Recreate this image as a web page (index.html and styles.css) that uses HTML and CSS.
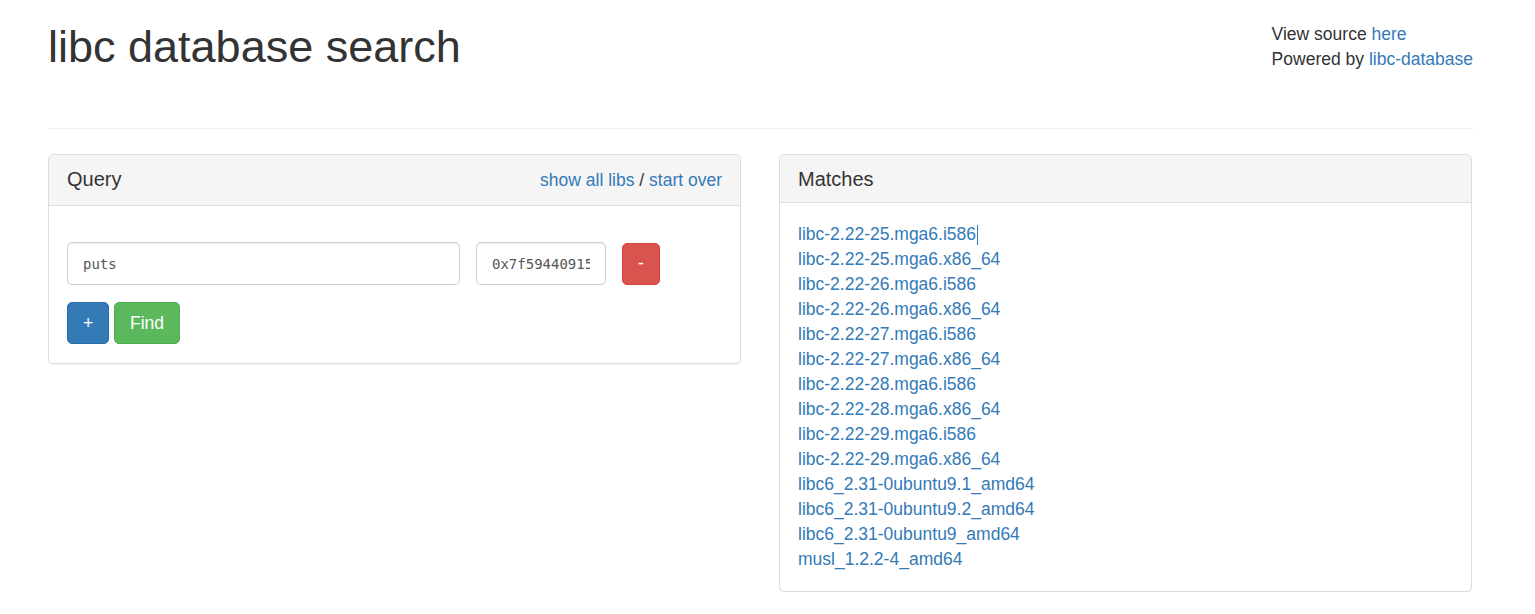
FILE: index.html
```html
<!DOCTYPE html>
<html>
<head>
<meta charset="utf-8">
<title>libc database search</title>
<link rel="stylesheet" href="styles.css">
</head>
<body>
<div class="container">
  <header class="header">
    <h1 class="title">libc database search</h1>
    <div class="meta">
      <div>View source <a href="#">here</a></div>
      <div>Powered by <a href="#">libc-database</a></div>
    </div>
  </header>
  <hr class="rule">
  <div class="row">
    <div class="col">
      <div class="panel">
        <div class="panel-heading query-heading">
          <h3 class="panel-title">Query</h3>
          <div class="heading-links"><a href="#">show all libs</a> / <a href="#">start over</a></div>
        </div>
        <div class="panel-body query-body">
          <div class="query-row">
            <input class="form-control sym" type="text" value="puts">
            <input class="form-control addr" type="text" value="0x7f59440915a0">
            <button class="btn btn-danger btn-minus">-</button>
          </div>
          <div class="actions">
            <button class="btn btn-primary">+</button>
            <button class="btn btn-success">Find</button>
          </div>
        </div>
      </div>
    </div>
    <div class="col">
      <div class="panel">
        <div class="panel-heading">
          <h3 class="panel-title">Matches</h3>
        </div>
        <div class="panel-body">
          <ul class="matches">
            <li><a href="#" class="caret-after">libc-2.22-25.mga6.i586</a></li>
            <li><a href="#">libc-2.22-25.mga6.x86_64</a></li>
            <li><a href="#">libc-2.22-26.mga6.i586</a></li>
            <li><a href="#">libc-2.22-26.mga6.x86_64</a></li>
            <li><a href="#">libc-2.22-27.mga6.i586</a></li>
            <li><a href="#">libc-2.22-27.mga6.x86_64</a></li>
            <li><a href="#">libc-2.22-28.mga6.i586</a></li>
            <li><a href="#">libc-2.22-28.mga6.x86_64</a></li>
            <li><a href="#">libc-2.22-29.mga6.i586</a></li>
            <li><a href="#">libc-2.22-29.mga6.x86_64</a></li>
            <li><a href="#">libc6_2.31-0ubuntu9.1_amd64</a></li>
            <li><a href="#">libc6_2.31-0ubuntu9.2_amd64</a></li>
            <li><a href="#">libc6_2.31-0ubuntu9_amd64</a></li>
            <li><a href="#">musl_1.2.2-4_amd64</a></li>
          </ul>
        </div>
      </div>
    </div>
  </div>
</div>
</body>
</html>
```
FILE: styles.css
```css
* { box-sizing: border-box; }
html, body { margin: 0; padding: 0; }
body {
  font-family: "Liberation Sans", Arial, sans-serif;
  font-size: 17.5px;
  line-height: 25px;
  color: #333;
  background: #fff;
}
a { color: #337ab7; text-decoration: none; }

.container {
  width: 1425px;
  margin-left: 48px;
}

.header {
  display: flex;
  justify-content: space-between;
  align-items: flex-start;
  padding-top: 22px;
}
.title {
  margin: 0;
  font-size: 45px;
  line-height: 49.5px;
  font-weight: 500;
  color: #333;
}

.rule {
  margin: 56px 0 0 0;
  border: 0;
  border-top: 1px solid #eee;
  height: 0;
}

.row {
  display: flex;
  gap: 38px;
  margin-top: 25px;
  align-items: flex-start;
}
.col {
  width: 693px;
}

.panel {
  background: #fff;
  border: 1px solid #ddd;
  border-radius: 5px;
  box-shadow: 0 1px 1px rgba(0, 0, 0, .05);
}
.panel-heading {
  background: #f5f5f5;
  border-bottom: 1px solid #ddd;
  border-radius: 4px 4px 0 0;
  padding: 12.5px 18px;
  display: flex;
  justify-content: space-between;
  align-items: baseline;
}
.query-heading { padding: 12px 18px; }
.panel-title {
  margin: 0;
  font-size: 20px;
  line-height: 22px;
  font-weight: 500;
  color: #333;
}
.query-heading .panel-title { line-height: 25px; }

.panel-body {
  padding: 18.75px 18px;
}

.query-row {
  display: flex;
  gap: 16px;
  align-items: center;
  margin-top: 17.5px;
}
.form-control {
  height: 43px;
  padding: 6px 15px;
  border: 1px solid #ccc;
  border-radius: 5px;
  box-shadow: inset 0 1px 1px rgba(0, 0, 0, .075);
  font-family: "DejaVu Sans Mono", "Liberation Mono", monospace;
  font-size: 14px;
  color: #555;
  background: #fff;
  outline: none;
}
.sym { width: 393px; }
.addr { width: 130px; }

.btn {
  display: inline-block;
  font-family: "Liberation Sans", Arial, sans-serif;
  font-size: 17.5px;
  line-height: 25px;
  padding: 7.5px 15px;
  border: 1px solid transparent;
  border-radius: 5px;
  color: #fff;
  cursor: pointer;
  margin: 0;
}
.btn-minus { width: 38px; height: 42px; padding: 0; }
.btn-danger { background: #d9534f; border-color: #d43f3a; }
.btn-primary { background: #337ab7; border-color: #2e6da4; width: 42px; padding: 7.5px 0; }
.btn-success { background: #5cb85c; border-color: #4cae4c; }

.actions {
  display: flex;
  gap: 5px;
  margin-top: 17px;
}

.matches {
  list-style: none;
  margin: 0;
  padding: 0;
}
.caret-after { position: relative; }
.caret-after::after {
  content: "";
  position: absolute;
  right: -2px;
  top: 1px;
  width: 1px;
  height: 20px;
  background: #337ab7;
}
```
